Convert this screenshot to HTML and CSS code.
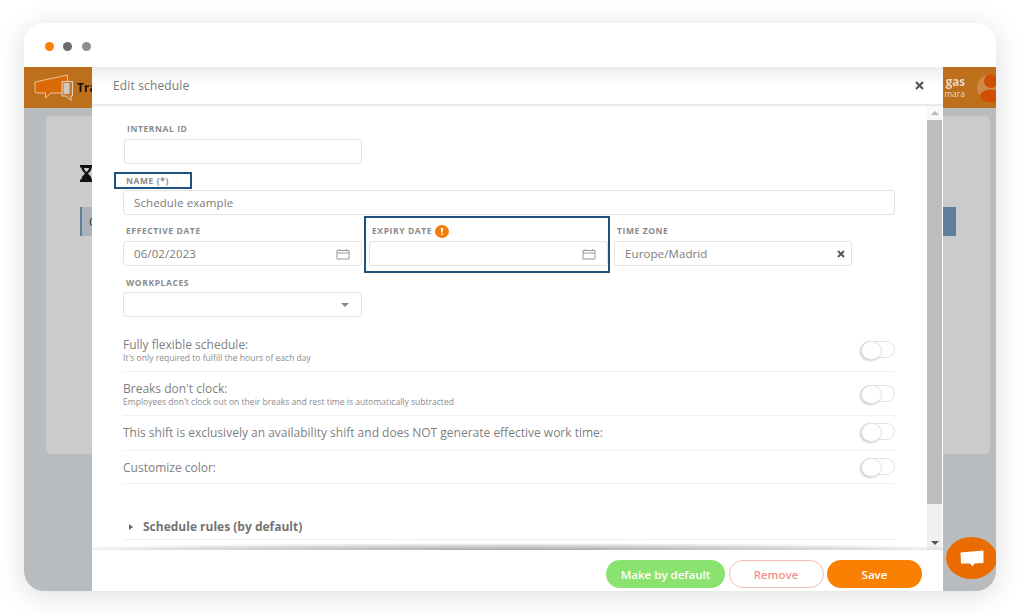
FILE: index.html
```html
<!DOCTYPE html>
<html lang="en">
<head>
<meta charset="utf-8">
<title>Edit schedule</title>
<link rel="stylesheet" href="styles.css">
</head>
<body>
<div class="window">
  <div class="titlebar">
    <span class="dot dot-orange"></span>
    <span class="dot dot-dark"></span>
    <span class="dot dot-grey"></span>
  </div>
  <div class="app">
    <header class="app-header">
      <div class="brand">
        <svg class="logo" width="40" height="28" viewBox="0 0 40 28">
          <path d="M1 8 33.500 1V19H17L11.500 24V19H3.500Q1 19 1 16.500Z" fill="#d96a05" stroke="#e3c6a4" stroke-width="1"/>
          <path d="M28 7.500H38.500V22H37V26.500L32 22H28Z" fill="#c9762a" stroke="#e6d3bd" stroke-width="1"/>
          <rect x="29.500" y="9" width="6" height="11" fill="#cfc9c0"/>
        </svg>
        <span class="brand-name">Tra</span>
      </div>
      <div class="user">
        <div class="user-text">
          <span class="user-name">gas</span>
          <span class="user-role">mara</span>
        </div>
        <svg class="avatar" width="32" height="30" viewBox="0 0 32 30">
          <circle cx="16" cy="15" r="14" fill="#cc8a48"/>
          <circle cx="16" cy="8" r="7" fill="#cf4f04"/>
          <ellipse cx="16" cy="23" rx="11" ry="6.500" fill="#cf4f04"/>
        </svg>
      </div>
    </header>
    <main class="app-body">
      <section class="card">
        <svg class="hourglass" width="13" height="17" viewBox="0 0 13 17">
          <path d="M0 0H13V2.500H11.500C11.500 6 9 7 8 8.500C9 10 11.500 11 11.500 14.500H13V17H0V14.500H1.500C1.500 11 4 10 5 8.500C4 7 1.500 6 1.500 2.500H0Z" fill="#111"/>
          <path d="M4 3H9C9 5 7.500 6 6.500 7C5.500 6 4 5 4 3Z" fill="#cbcbcb"/>
        </svg>
        <div class="list-row">
          <span class="list-row-text">C</span>
          <span class="list-row-action"></span>
        </div>
      </section>
    </main>
  </div>

  <div class="modal">
    <div class="modal-header">
      <span class="modal-title">Edit schedule</span>
      <svg class="icon-close" width="9" height="9" viewBox="0 0 9 9">
        <path d="M1 1 8 8M8 1 1 8" stroke="#555" stroke-width="2.200"/>
      </svg>
    </div>
    <div class="modal-body">
      <div class="form">
        <div class="field field-id">
          <label class="label">INTERNAL ID</label>
          <div class="input input-id"></div>
        </div>
        <div class="field field-name">
          <label class="label label-tight">NAME (*)</label>
          <div class="input">Schedule example</div>
          <span class="highlight highlight-name"></span>
        </div>
        <div class="date-row">
          <div class="field field-col">
            <label class="label">EFFECTIVE DATE</label>
            <div class="input input-icon">06/02/2023
              <svg class="icon-cal" width="14" height="12" viewBox="0 0 14 12"><path d="M1 2.500H13V11H1ZM1 5H13M3.500 1V3M10.500 1V3" fill="none" stroke="#999" stroke-width="1"/></svg>
            </div>
          </div>
          <div class="field field-col">
            <label class="label">EXPIRY DATE
              <svg class="icon-info" width="14" height="13" viewBox="0 0 14 13"><ellipse cx="7" cy="6.500" rx="7" ry="6.500" fill="#f67c06"/><path d="M5.800 3H8.200V4.800H7.800V7.500H6.200V4.800H5.800ZM6.300 8.300H7.700V10H6.300Z" fill="#fff"/></svg>
            </label>
            <div class="input input-icon">
              <svg class="icon-cal" width="14" height="12" viewBox="0 0 14 12"><path d="M1 2.500H13V11H1ZM1 5H13M3.500 1V3M10.500 1V3" fill="none" stroke="#999" stroke-width="1"/></svg>
            </div>
            <span class="highlight highlight-expiry"></span>
          </div>
          <div class="field field-col field-zone">
            <label class="label">TIME ZONE</label>
            <div class="input input-icon input-clear">Europe/Madrid
              <svg class="icon-clear" width="8" height="8" viewBox="0 0 8 8"><path d="M1 1 7 7M7 1 1 7" stroke="#555" stroke-width="1.800"/></svg>
            </div>
          </div>
        </div>
        <div class="field field-col field-work">
          <label class="label label-tight">WORKPLACES</label>
          <div class="input input-icon">
            <span class="caret-down"></span>
          </div>
        </div>

        <div class="switches">
          <div class="switch-row switch-row-double">
            <div class="switch-text">
              <div class="switch-title">Fully flexible schedule:</div>
              <div class="switch-sub">It's only required to fulfill the hours of each day</div>
            </div>
            <span class="toggle"></span>
          </div>
          <div class="switch-row switch-row-double">
            <div class="switch-text">
              <div class="switch-title">Breaks don't clock:</div>
              <div class="switch-sub">Employees don't clock out on their breaks and rest time is automatically subtracted</div>
            </div>
            <span class="toggle"></span>
          </div>
          <div class="switch-row">
            <div class="switch-title">This shift is exclusively an availability shift and does NOT generate effective work time:</div>
            <span class="toggle"></span>
          </div>
          <div class="switch-row switch-row-last">
            <div class="switch-title">Customize color:</div>
            <span class="toggle"></span>
          </div>
        </div>

        <div class="rules">
          <span class="caret-right"></span>
          <span class="rules-title">Schedule rules (by default)</span>
        </div>
      </div>
      <div class="scrollbar">
        <div class="scroll-up"><span class="caret-up"></span></div>
        <div class="scroll-thumb"></div>
        <div class="scroll-track"><span class="caret-down caret-dark"></span></div>
      </div>
    </div>
    <div class="modal-footer">
      <button class="btn btn-green">Make by default</button>
      <button class="btn btn-outline">Remove</button>
      <button class="btn btn-orange">Save</button>
    </div>
  </div>

  <div class="chat">
    <svg width="24" height="17" viewBox="0 0 24 17"><path d="M0.500 2.500 23.500 0.500V13L14.500 13.500 12.500 16.500 10 13.500H1Z" fill="#fff"/></svg>
  </div>
</div>
</body>
</html>
```
FILE: styles.css
```css
* { box-sizing: border-box; }

html, body { height: 100%; }

body {
  margin: 0;
  padding: 23px 36px 0 24px;
  background: #fff;
  font-family: "Open Sans", "Liberation Sans", sans-serif;
  color: #7b7b7b;
  overflow: hidden;
}

.window {
  position: relative;
  width: 972px;
  height: 568px;
  border-radius: 20px;
  background: #fff;
  box-shadow: 0 4px 28px rgba(0, 0, 0, .14);
  overflow: hidden;
  display: flex;
  flex-direction: column;
  filter: blur(.5px);
}

.titlebar {
  height: 44px;
  flex: none;
  display: flex;
  align-items: center;
  gap: 9.500px;
  padding-left: 20.500px;
  padding-top: 2px;
  background: #fff;
}

.dot { width: 9px; height: 9px; border-radius: 50%; }
.dot-orange { background: #f98003; }
.dot-dark { background: #6c6c6c; }
.dot-grey { background: #8f8f8f; }

.app {
  flex: 1;
  display: flex;
  flex-direction: column;
  background: #b9bcbf;
}

.app-header {
  height: 41px;
  flex: none;
  background: #bd6f1c;
  display: flex;
  justify-content: space-between;
  align-items: center;
  padding-left: 10px;
}

.brand { display: flex; align-items: center; gap: 3px; }
.brand-name { font-size: 12px; font-weight: 700; color: #111; }

.user { display: flex; align-items: center; gap: 10px; margin-right: -11px; }
.user-text { display: flex; flex-direction: column; align-items: flex-end; line-height: 12px; }
.user-name { font-size: 11.500px; font-weight: 700; color: #e6d8c8; }
.user-role { font-size: 8.500px; color: #e6d8c8; }

.app-body { flex: 1; padding: 8px 6px 0 22px; }

.card {
  height: 338px;
  border-radius: 5px;
  background: #cbcbcb;
  padding: 49px 34px 0;
}

.hourglass { display: block; }

.list-row {
  margin-top: 25px;
  height: 29px;
  display: flex;
  justify-content: space-between;
  align-items: center;
  background: #aeb3ba;
  border-left: 2px solid #5d7f9c;
  padding-left: 7px;
}

.list-row-text { font-size: 11px; color: #333; }
.list-row-action { width: 13px; height: 29px; background: #5d7f9c; }

.modal {
  position: absolute;
  left: 68px;
  top: 44px;
  width: 851px;
  bottom: 0;
  background: #fff;
  display: flex;
  flex-direction: column;
}

.modal-header {
  height: 39px;
  flex: none;
  display: flex;
  justify-content: space-between;
  align-items: center;
  padding: 0 19px 0 21px;
  background: linear-gradient(#ececec, #fff 45%);
  border-bottom: 2px solid #e9e9e9;
}

.modal-title { font-size: 12px; letter-spacing: .15px; color: #777; }

.modal-body { flex: 1; min-height: 0; display: flex; }

.form { width: 835px; padding: 18px 32px 0 31px; }

.field { position: relative; }
.field-id { padding-left: 1px; width: 239px; }
.field-name { margin-top: 12px; }
.field-col { width: 239px; }
.field-zone { width: 238px; margin-left: -1px; }
.field-work { margin-top: 12px; }

.date-row { display: flex; gap: 7px; margin-top: 11px; }

.label {
  display: flex;
  align-items: center;
  gap: 3px;
  height: 10px;
  margin-bottom: 5px;
  padding: 0 0 2px 3px;
  font-size: 8.500px;
  font-weight: 700;
  letter-spacing: .6px;
  color: #8a8a8a;
}

.label-tight { margin-bottom: 4px; }

.input {
  height: 25px;
  border: 1px solid #e3e3e3;
  border-radius: 3px;
  background: #fff;
  padding: 0 10px;
  font-size: 11.500px;
  line-height: 23px;
  letter-spacing: .1px;
  color: #7b7b7b;
}

.input-icon {
  display: flex;
  justify-content: space-between;
  align-items: center;
  padding-right: 11px;
}

.input-clear { padding-right: 6px; }

.icon-cal { margin-left: auto; }
.icon-close { display: block; }
.icon-info { margin-top: 2px; }

.highlight {
  position: absolute;
  border: 2px solid #20527f;
  pointer-events: none;
}

.highlight-name { left: -9px; top: -4px; width: 78px; height: 17px; }
.highlight-expiry { left: -5px; top: -10px; right: -2px; bottom: -7px; }

.caret-down {
  width: 0;
  height: 0;
  margin: 1px 1px 0 auto;
  border-left: 4px solid transparent;
  border-right: 4px solid transparent;
  border-top: 4px solid #8a8a8a;
}

.caret-dark { margin: 0; border-top-color: #555; }

.caret-up {
  width: 0;
  height: 0;
  border-left: 4px solid transparent;
  border-right: 4px solid transparent;
  border-bottom: 4px solid #b5b5b5;
}

.caret-right {
  width: 0;
  height: 0;
  margin: 0 10px 0 6px;
  border-top: 3.500px solid transparent;
  border-bottom: 3.500px solid transparent;
  border-left: 4px solid #666;
}

.switches { margin-top: 21px; }

.switch-row {
  display: flex;
  justify-content: space-between;
  align-items: center;
  padding: 10px 0;
  border-bottom: 1px solid #f1f1f1;
}

.switch-row-double { padding-bottom: 8px; }
.switch-row:first-child { padding-top: 0; }
.switch-row-last { padding-bottom: 8px; }

.switch-title { font-size: 12px; line-height: 14px; color: #7f7f7f; }
.switch-sub { margin-top: 1px; font-size: 8.550px; line-height: 10px; color: #8c8c8c; }

.toggle {
  position: relative;
  width: 34px;
  height: 17px;
  margin: -3px 0 0;
  border: 1px solid #e0e0e0;
  border-radius: 9px;
  background: #fff;
}

.toggle::before {
  content: "";
  position: absolute;
  left: -1px;
  top: -1px;
  width: 19px;
  height: 17px;
  border-radius: 50%;
  background: #fff;
  border: 1px solid #e6e6e6;
  box-shadow: -1px 1px 2px rgba(0, 0, 0, .22);
}

.rules {
  display: flex;
  align-items: center;
  margin-top: 36px;
  padding-bottom: 5px;
  border-bottom: 1px solid #f0f0f0;
}

.rules-title { font-size: 12px; line-height: 14px; font-weight: 700; color: #747474; }

.scrollbar {
  width: 15px;
  flex: none;
  display: flex;
  flex-direction: column;
  background: #f0f0f0;
  margin-right: 1px;
}

.scroll-up {
  height: 14px;
  display: flex;
  justify-content: center;
  align-items: center;
  background: #f8f8f8;
}

.scroll-thumb { height: 384px; background: #bdbdbd; }

.scroll-track {
  flex: 1;
  display: flex;
  justify-content: center;
  align-items: flex-end;
  padding-bottom: 5px;
}

.modal-footer {
  position: relative;
  height: 41px;
  flex: none;
  display: flex;
  justify-content: flex-end;
  gap: 3.500px;
  padding: 10px 21px 0 0;
  background: #fff;
}

.modal-footer::before {
  content: "";
  position: absolute;
  left: 0;
  right: 0;
  top: -7px;
  height: 7px;
  background: radial-gradient(ellipse 58% 100% at 50% 100%, #a6a6a6, rgba(200, 200, 200, .6) 70%, rgba(255, 255, 255, 0));
}

.btn {
  height: 28px;
  border: 0;
  border-radius: 14px;
  padding: 0;
  font-family: inherit;
  font-size: 11.500px;
  font-weight: 600;
  color: #fff;
}

.btn-green { width: 119px; background: #8ae36f; }
.btn-outline { width: 95px; background: #fff; border: 1.500px solid #f8b9b9; color: #f48f8f; }
.btn-orange { width: 95px; background: #f98003; }

.chat {
  position: absolute;
  left: 922px;
  top: 514px;
  width: 51px;
  height: 42px;
  border-radius: 50%;
  background: #ea6c00;
  display: flex;
  justify-content: center;
  align-items: center;
}
```
